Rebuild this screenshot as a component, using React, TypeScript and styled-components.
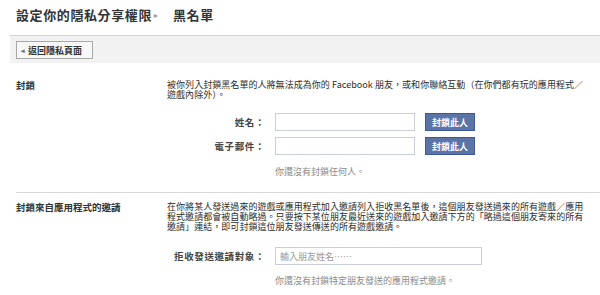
import styled, { createGlobalStyle } from 'styled-components';

const GlobalStyle = createGlobalStyle`
  body {
    margin: 0;
    background: #fff;
    font-family: "Noto Sans CJK TC", "Liberation Sans", sans-serif;
    color: #333;
  }
`;

export default function App() {
  return (
    <>
      <GlobalStyle />
      <Page>
        <Header>
          <Crumb>設定你的隱私分享權限</Crumb>
          <Arrow>▸</Arrow>
          <Crumb>黑名單</Crumb>
        </Header>
        <Bar>
          <BackButton>
            <span className="caret">◂</span>返回隱私頁面
          </BackButton>
        </Bar>

        <Section>
          <Label>封鎖</Label>
          <Body>
            <Desc>
              被你列入封鎖黑名單的人將無法成為你的 Facebook 朋友，或和你聯絡互動（在你們都有玩的應用程式／遊戲內除外）。
            </Desc>
            <Form $top={13}>
              <Row>
                <FieldLabel>姓名：</FieldLabel>
                <Input $width={140} />
                <BlueButton>封鎖此人</BlueButton>
              </Row>
              <Row>
                <FieldLabel>電子郵件：</FieldLabel>
                <Input $width={140} />
                <BlueButton>封鎖此人</BlueButton>
              </Row>
            </Form>
            <Note $top={12}>你還沒有封鎖任何人。</Note>
          </Body>
        </Section>

        <Section $divider>
          <Label>封鎖來自應用程式的邀請</Label>
          <Body>
            <Desc>
              在你將某人發送過來的遊戲或應用程式加入邀請列入拒收黑名單後，這個朋友發送過來的所有遊戲／應用程式邀請都會被自動略過。只要按下某位朋友最近送來的遊戲加入邀請下方的「略過這個朋友寄來的所有邀請」連結，即可封鎖這位朋友發送傳送的所有遊戲邀請。
            </Desc>
            <Form $top={15}>
              <Row>
                <FieldLabel>拒收發送邀請對象：</FieldLabel>
                <Input $width={207} placeholder="輸入朋友姓名……" />
              </Row>
            </Form>
            <Note $top={11}>你還沒有封鎖特定朋友發送的應用程式邀請。</Note>
          </Body>
        </Section>
      </Page>
    </>
  );
}

const Page = styled.main`
  padding-left: 10px;
  width: 590px;
`;

const Header = styled.header`
  display: flex;
  align-items: flex-start;
  height: 35px;
  box-sizing: border-box;
  padding: 6px 0 0 6px;
`;

const Crumb = styled.h1`
  margin: 0;
  font-size: 13px;
  line-height: 17px;
  font-weight: 700;
  letter-spacing: 0.6px;
  color: #333;
`;

const Arrow = styled.span`
  font-size: 8px;
  line-height: 17px;
  color: #999;
  margin: 0 15px 0 2px;
`;

const Bar = styled.div`
  border-top: 1px solid #d6d6d6;
  background: #f2f2f2;
  padding: 5px 6px 4px;
`;

const BackButton = styled.button`
  display: flex;
  align-items: center;
  height: 18px;
  width: 77px;
  box-sizing: border-box;
  padding: 0 0 0 4px;
  border: 1px solid #a8a8a8;
  background: #f7f7f7;
  font-family: inherit;
  font-size: 9px;
  font-weight: 700;
  color: #333;
  cursor: pointer;

  .caret {
    font-size: 7px;
    color: #777;
    margin-right: 3px;
  }
`;

const Section = styled.section<{ $divider?: boolean }>`
  display: grid;
  grid-template-columns: 151px 1fr;
  margin-left: 6px;
  padding: ${({ $divider }) => ($divider ? '9px 0 0' : '17px 0 15px')};
  border-top: ${({ $divider }) => ($divider ? '1px solid #d8d8d8' : 'none')};
`;

const Label = styled.h2`
  margin: 0;
  font-size: 9.5px;
  line-height: 10px;
  font-weight: 700;
  color: #333;
`;

const Body = styled.div`
  display: flex;
  flex-direction: column;
`;

const Desc = styled.p`
  margin: 0;
  width: 424px;
  font-size: 9px;
  line-height: 10px;
  letter-spacing: 0.05px;
  color: #2b2b2b;
`;

const Form = styled.div<{ $top: number }>`
  display: flex;
  flex-direction: column;
  gap: 6px;
  margin-top: ${({ $top }) => $top}px;
`;

const Row = styled.div`
  display: grid;
  grid-template-columns: 98px auto auto;
  column-gap: 10px;
  align-items: center;
  justify-content: start;
`;

const FieldLabel = styled.label`
  text-align: right;
  font-size: 9.5px;
  font-weight: 700;
  color: #444;
  letter-spacing: 0.6px;
`;

const Input = styled.input<{ $width: number }>`
  width: ${({ $width }) => $width}px;
  height: 18px;
  box-sizing: border-box;
  border: 1px solid #c9ced8;
  padding: 0 4px;
  font-family: inherit;
  font-size: 9px;
  outline: none;

  &::placeholder {
    color: #9a9a9a;
  }
`;

const BlueButton = styled.button`
  width: 50px;
  height: 18px;
  padding: 0;
  border: 1px solid #3b5998;
  background: #5b74a8;
  color: #fff;
  font-family: inherit;
  font-size: 9px;
  font-weight: 700;
  cursor: pointer;
`;

const Note = styled.p<{ $top: number }>`
  margin: ${({ $top }) => $top}px 0 0 108px;
  font-size: 9px;
  line-height: 10px;
  color: #8a8a8a;
`;
